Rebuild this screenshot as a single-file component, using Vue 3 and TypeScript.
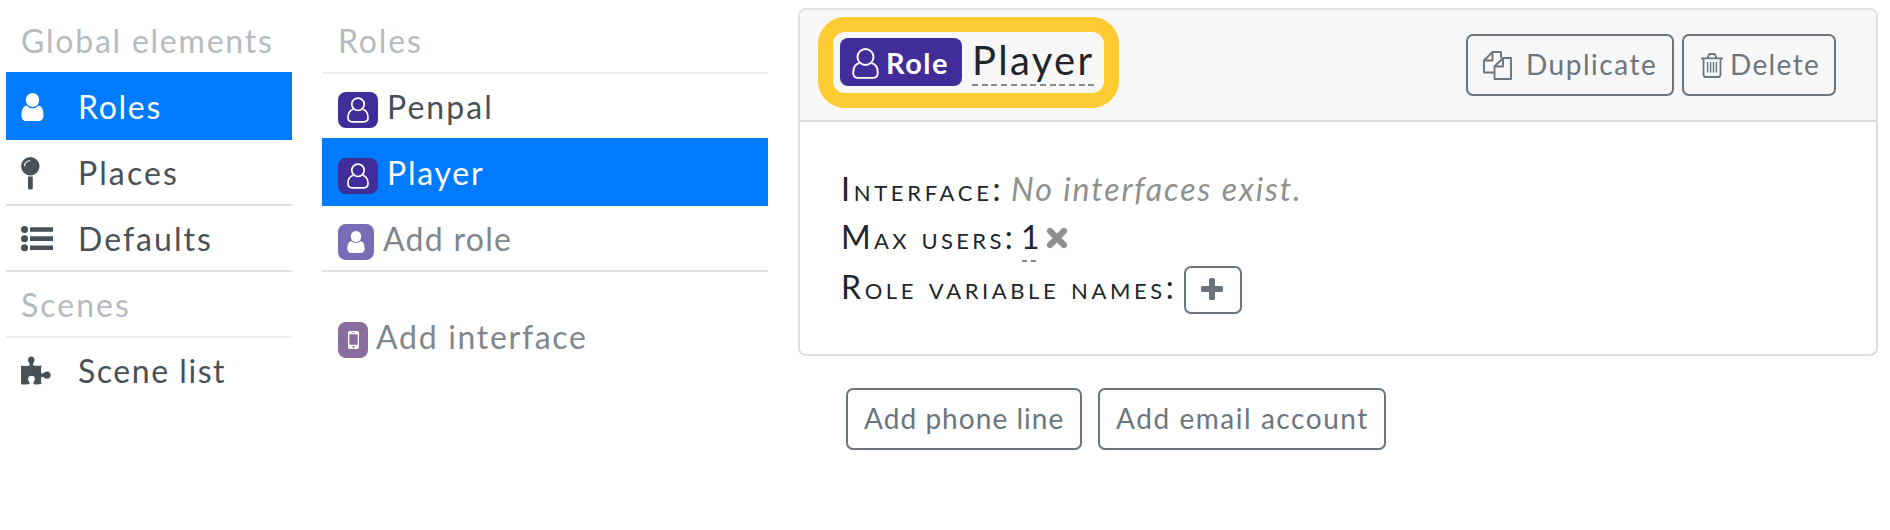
<script setup lang="ts">
interface NavItem {
  label: string
  kind: 'header' | 'item' | 'add'
  icon?: string
  badge?: string
  active?: boolean
  spacing: number
}

const globalNav: NavItem[] = [
  { label: 'Global elements', kind: 'header', spacing: 1.77 },
  { label: 'Roles', kind: 'item', icon: 'user', active: true, spacing: 1.7 },
  { label: 'Places', kind: 'item', icon: 'pin', spacing: 2.1 },
  { label: 'Defaults', kind: 'item', icon: 'list', spacing: 2.05 },
  { label: 'Scenes', kind: 'header', spacing: 2.02 },
  { label: 'Scene list', kind: 'item', icon: 'puzzle', spacing: 1.54 },
]

const roleNav: NavItem[] = [
  { label: 'Roles', kind: 'header', spacing: 1.85 },
  { label: 'Penpal', kind: 'item', badge: 'role', spacing: 2.05 },
  { label: 'Player', kind: 'item', badge: 'role', active: true, spacing: 1.77 },
  { label: 'Add role', kind: 'add', badge: 'new-role', spacing: 1.28 },
]
</script>

<template>
  <main class="page">
    <nav class="sidebar">
      <div
        v-for="n in globalNav"
        :key="n.label"
        class="row"
        :class="[n.kind, { active: n.active }]"
      >
        <span v-if="n.icon" class="glyph">
          <svg v-if="n.icon === 'user'" width="23" height="28" viewBox="0 0 24 28" preserveAspectRatio="none" fill="currentColor">
            <circle cx="12" cy="7" r="7" />
            <path d="M5.600 12.600C1.800 13.600.5 17.400.5 22.200.5 25.700 2.500 28 5.500 28h13c3 0 5-2.300 5-5.800 0-4.800-1.300-8.600-5.100-9.600a9 9 0 0 1-12.800 0z" />
          </svg>
          <svg v-else-if="n.icon === 'pin'" width="19" height="33" viewBox="0 0 19 33" fill="currentColor">
            <circle cx="9.300" cy="9.300" r="9.200" />
            <path d="M7 19.500h4.800V31q0 1.500-1.500 1.500H8.500Q7 32.500 7 31z" />
            <path d="M3.600 9.200q.2-5 5.600-5.700" fill="none" stroke="#fff" stroke-width="1.200" />
          </svg>
          <svg v-else-if="n.icon === 'list'" width="32" height="26" viewBox="0 0 32 26" fill="currentColor">
            <circle cx="3.500" cy="3.600" r="3.500" /><circle cx="3.500" cy="12.700" r="3.500" /><circle cx="3.500" cy="21.800" r="3.500" />
            <path d="M9 1.200h23v4.600H9zM9 10.300h23v4.600H9zM9 19.400h23V24H9z" />
          </svg>
          <svg v-else class="puzzle" width="30" height="29" viewBox="0 0 30 29" fill="currentColor">
            <path d="M0 9.500q4.500.9 8 .3c1.500-.3.600-2-.2-3.200C6.300 4 7.200.5 10.300.5s4 3.500 2.500 6.100c-.8 1.200-1.500 2.700 0 3q3.500.5 7.700-.1-.9 4.200-.3 7.200c.4 1.700 1.800 1 3-.1 2.500-2.200 6.500-1.300 6.500 2.500s-4 4.700-6.500 2.700c-1.200-1-2.500-1.700-3 0q-.5 3 .3 6.200-4 .8-7.200.3c-1.600-.3-1-1.700-.1-3 1.700-2.500.4-5.500-2.700-5.500s-4.300 3-2.800 5.500c.9 1.300 1.500 2.800 0 3Q4 28.600 0 28.200z" />
          </svg>
        </span>
        <span class="label" :style="{ letterSpacing: n.spacing + 'px' }">{{ n.label }}</span>
      </div>
    </nav>

    <nav class="roles">
      <div
        v-for="n in roleNav"
        :key="n.label"
        class="row"
        :class="[n.kind, { active: n.active }]"
      >
        <span v-if="n.badge" class="badge" :class="n.badge">
          <svg v-if="n.badge === 'role'" width="22" height="26" viewBox="0 0 22 26" fill="none" stroke="currentColor" stroke-width="1.700">
            <circle cx="11" cy="7.300" r="6.200" />
            <path d="M6.200 12.200C2.500 13.300 1 17 1 20.600c0 2.700 1.600 4.200 4.100 4.200h11.800c2.500 0 4.100-1.500 4.100-4.200 0-3.600-1.500-7.300-5.200-8.400" />
          </svg>
          <svg v-else width="18" height="22" viewBox="0 0 24 28" preserveAspectRatio="none" fill="currentColor">
            <circle cx="12" cy="7" r="7" />
            <path d="M5.600 12.600C1.800 13.600.5 17.400.5 22.200.5 25.700 2.500 28 5.500 28h13c3 0 5-2.300 5-5.800 0-4.800-1.300-8.600-5.100-9.600a9 9 0 0 1-12.800 0z" />
          </svg>
        </span>
        <span class="label" :style="{ letterSpacing: n.spacing + 'px' }">{{ n.label }}</span>
      </div>
      <div class="row add interface-row">
        <span class="badge interface">
          <svg width="11" height="18" viewBox="0 0 11 18">
            <path fill="currentColor" fill-rule="evenodd" d="M2 0h7q2 0 2 2v14q0 2-2 2H2q-2 0-2-2V2q0-2 2-2zM1.300 3.300v10.500h8.400V3.300zM4 1.300v.8h3v-.8zM5.500 14.900a1 1 0 1 0 .01 0z" />
          </svg>
        </span>
        <span class="label add-interface-label">Add interface</span>
      </div>
    </nav>

    <section class="detail">
      <article class="card">
        <header class="card-head">
          <div class="highlight">
            <span class="role-badge">
              <svg width="27" height="31" viewBox="0 0 27 31" fill="none" stroke="currentColor" stroke-width="1.900">
                <circle cx="13.500" cy="9" r="8" />
                <path d="M7.300 15.100C3 16.300 1.200 20.300 1.200 24.700c0 3.300 2 5.200 5 5.200h14.600c3 0 5-1.900 5-5.200 0-4.400-1.800-8.400-6.100-9.600" />
              </svg>
              <span class="role-word">Role</span>
            </span>
            <span class="role-name">Player</span>
          </div>
          <div class="actions">
            <button class="btn duplicate">
              <svg width="29" height="29" viewBox="0 0 29 29" fill="none" stroke="currentColor" stroke-width="1.900" stroke-linejoin="round">
                <path d="M11 21.500H1V9.500L9.500 1H18v6M9.500 1v8.500H1" />
                <path d="M28 7v21H11.500V15.500L20 7zM20 7v8.500h-8.500" />
              </svg>
              <span class="duplicate-word">Duplicate</span>
            </button>
            <button class="btn delete">
              <svg width="22" height="25" viewBox="0 0 22 25" fill="none" stroke="currentColor" stroke-width="1.800">
                <path d="M0 5.300h22M2.500 5.300v16q0 2.700 2.300 2.700h12.400q2.300 0 2.300-2.700v-16M6.500 5l1.300-3.200q.4-.8 1.200-.8h4q.8 0 1.200.8L15.500 5" />
                <path d="M6.600 9v10.500M9.600 9v10.500M12.500 9v10.500M15.400 9v10.500" stroke-width="1.400" />
              </svg>
              <span class="delete-word">Delete</span>
            </button>
          </div>
        </header>
        <div class="card-body">
          <div class="field">
            <span class="name name-interface">Interface:</span>
            <em class="empty">No interfaces exist.</em>
          </div>
          <div class="field field-users">
            <span class="name name-users">Max users:</span>
            <span class="value">1</span>
            <svg class="clear" width="22" height="22" viewBox="0 0 22 22" stroke="currentColor" stroke-width="6.200" stroke-linecap="round">
              <path d="M4 4l14 14M18 4L4 18" />
            </svg>
          </div>
          <div class="field field-vars">
            <span class="name name-vars">Role variable names:</span>
            <button class="btn plus">
              <svg width="22" height="22" viewBox="0 0 22 22" fill="currentColor">
                <path d="M8 1.500Q8 0 9.500 0h3Q14 0 14 1.500V8h6.500Q22 8 22 9.500v3q0 1.500-1.500 1.500H14v6.500q0 1.500-1.500 1.500h-3Q8 22 8 20.500V14H1.500Q0 14 0 12.500v-3Q0 8 1.500 8H8z" />
              </svg>
            </button>
          </div>
        </div>
      </article>
      <div class="adders">
        <button class="btn phone">Add phone line</button>
        <button class="btn email">Add email account</button>
      </div>
    </section>
  </main>
</template>

<style>
body {
  background: #fff;
}
</style>

<style scoped>
.page {
  display: flex;
  align-items: flex-start;
  width: 1890px;
  height: 530px;
  box-sizing: border-box;
  padding-left: 6px;
  overflow: hidden;
  font-family: Lato, 'Liberation Sans', sans-serif;
  font-size: 32px;
  line-height: 44px;
  color: #212529;
  white-space: nowrap;
}
.sidebar {
  width: 286px;
  padding-top: 6px;
}
.roles {
  width: 446px;
  margin-left: 30px;
  padding-top: 6px;
}
.row {
  display: flex;
  box-sizing: border-box;
  height: 68px;
  margin-bottom: -2px;
  padding: 13px 0 0 15px;
  border-bottom: 2px solid #dfdfdf;
  color: #495057;
}
.roles .row {
  padding-left: 16px;
}
.row.header {
  border-bottom-color: #efefef;
  color: #b6babe;
}
.row.active {
  position: relative;
  background: #007bff;
  border-color: #007bff;
  color: #fff;
}
.row.add {
  color: #80868b;
}
.sidebar .row:last-child {
  border-bottom-color: transparent;
}
.glyph {
  display: flex;
  align-items: center;
  width: 57px;
  height: 44px;
}
.puzzle {
  margin-bottom: 2px;
}
.badge {
  display: flex;
  align-items: center;
  justify-content: center;
  box-sizing: border-box;
  height: 36px;
  margin-top: 7px;
  border-radius: 8px;
  color: #fff;
}
.badge.role {
  width: 40px;
  margin-right: 9px;
  background: #402d99;
}
.badge.new-role {
  width: 36px;
  margin-right: 9px;
  background: #796cb7;
}
.badge.interface {
  width: 30px;
  margin-right: 8px;
  background: #8a6d9f;
}
.interface-row {
  margin-top: 32px;
  border-bottom-color: transparent;
}
.add-interface-label {
  letter-spacing: 1.7px;
}
.detail {
  width: 1080px;
  margin-left: 30px;
  padding-top: 8px;
}
.card {
  box-sizing: border-box;
  height: 348px;
  border: 2px solid #dfdfdf;
  border-radius: 8px;
  overflow: hidden;
}
.card-head {
  display: flex;
  justify-content: space-between;
  box-sizing: border-box;
  height: 112px;
  padding: 7px 40px 0 18px;
  background: #f7f7f7;
  border-bottom: 2px solid #dbdbdb;
}
.highlight {
  display: flex;
  box-sizing: border-box;
  width: 301px;
  height: 91px;
  padding: 6px 0 0 7px;
  border: 15px solid #ffcb32;
  border-radius: 27px;
}
.role-badge {
  display: flex;
  box-sizing: border-box;
  width: 122px;
  height: 48px;
  padding: 10px 0 0 12px;
  border-radius: 8px;
  background: #402d99;
  color: #fff;
}
.role-word {
  margin: -5px 0 0 7px;
  font-size: 29px;
  font-weight: 700;
  line-height: 40px;
  letter-spacing: 1.5px;
}
.role-name {
  box-sizing: border-box;
  width: 122px;
  height: 48px;
  margin-left: 10px;
  font-size: 40px;
  line-height: 44px;
  letter-spacing: 2.3px;
  background: repeating-linear-gradient(90deg, #888 0 6px, transparent 6px 9.700px) left bottom / 100% 2px no-repeat;
}
.actions {
  display: flex;
  gap: 8px;
  padding-top: 17px;
}
.btn {
  display: flex;
  align-items: center;
  box-sizing: border-box;
  height: 62px;
  margin: 0;
  padding: 0;
  border: 2px solid #6c757d;
  border-radius: 7px;
  background: transparent;
  color: #6c757d;
  font-family: inherit;
  font-size: 28px;
  line-height: 40px;
}
.duplicate {
  width: 208px;
  padding-left: 15px;
}
.duplicate-word {
  margin: -2px 0 0 14px;
  letter-spacing: 1.53px;
}
.delete {
  width: 154px;
  padding-left: 17px;
}
.delete-word {
  margin: -2px 0 0 7px;
  letter-spacing: 1.37px;
}
.card-body {
  padding: 44px 0 0 41px;
}
.field {
  display: flex;
  height: 48px;
  line-height: 46px;
}
.name {
  font-variant-caps: small-caps;
}
.name-interface {
  width: 170px;
  letter-spacing: 3.7px;
}
.name-users {
  width: 181px;
  letter-spacing: 3.35px;
}
.name-vars {
  width: 343px;
  letter-spacing: 3.6px;
}
.empty {
  color: #8f8f8f;
  letter-spacing: 1.95px;
}
.value {
  width: 14px;
  height: 48px;
  text-indent: -1px;
  background: repeating-linear-gradient(90deg, #888 0 5px, transparent 5px 9px) left bottom / 100% 2px no-repeat;
}
.clear {
  margin: 13px 0 0 10px;
  color: #8f8f8f;
}
.field-vars {
  height: 52px;
  padding-top: 2px;
}
.plus {
  justify-content: center;
  width: 58px;
  height: 48px;
  margin-top: 2px;
  padding: 0 2px 2px 0;
}
.adders {
  display: flex;
  gap: 16px;
  padding: 32px 0 0 48px;
}
.phone {
  width: 236px;
  padding: 0 0 2px 16px;
  letter-spacing: 1.05px;
}
.email {
  width: 288px;
  padding: 0 0 2px 16px;
  letter-spacing: 1.55px;
}
</style>
